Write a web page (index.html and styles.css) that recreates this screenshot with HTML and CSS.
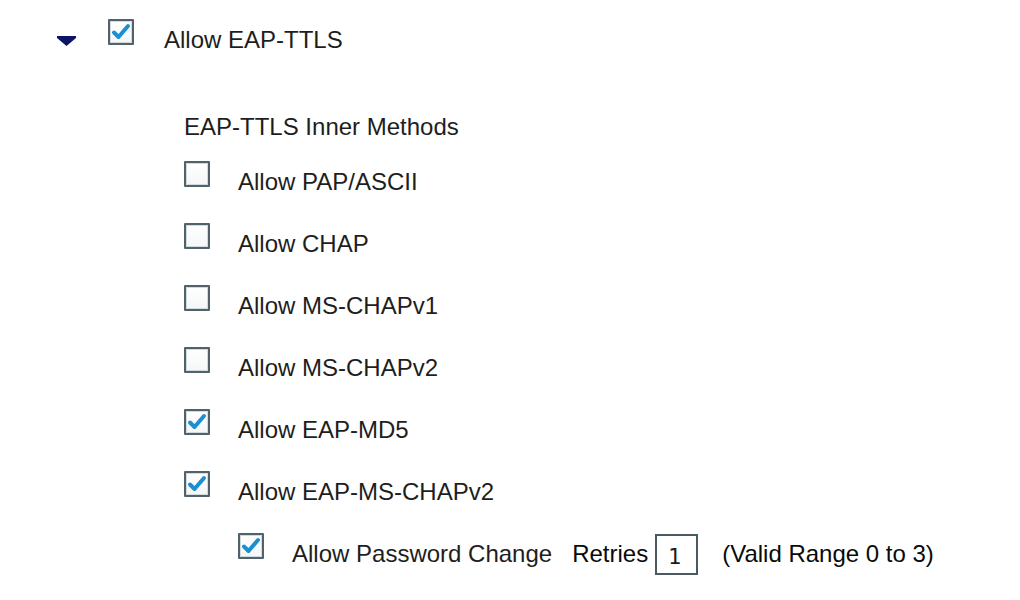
FILE: index.html
```html
<!DOCTYPE html>
<html>
<head>
<meta charset="utf-8">
<link rel="stylesheet" href="styles.css">
</head>
<body>
<div class="page">
  <div class="row top-row">
    <span class="caret"><svg width="19" height="10" viewBox="0 0 19 10"><polygon points="0,0 19,0 19,2 9.5,10 0,2" fill="#0b1566"/></svg></span>
    <span class="cb checked"><svg viewBox="0 0 22 22" width="22" height="22"><path d="M4 11.5 L8.5 16 L18 5" fill="none" stroke="#1b8fd2" stroke-width="4" stroke-linecap="round" stroke-linejoin="round"/></svg></span>
    <span class="label">Allow EAP-TTLS</span>
  </div>

  <div class="inner">
    <div class="heading">EAP-TTLS Inner Methods</div>
    <div class="row">
      <span class="cb"></span>
      <span class="label">Allow PAP/ASCII</span>
    </div>
    <div class="row">
      <span class="cb"></span>
      <span class="label">Allow CHAP</span>
    </div>
    <div class="row">
      <span class="cb"></span>
      <span class="label">Allow MS-CHAPv1</span>
    </div>
    <div class="row">
      <span class="cb"></span>
      <span class="label">Allow MS-CHAPv2</span>
    </div>
    <div class="row">
      <span class="cb checked"><svg viewBox="0 0 22 22" width="22" height="22"><path d="M4 11.5 L8.5 16 L18 5" fill="none" stroke="#1b8fd2" stroke-width="4" stroke-linecap="round" stroke-linejoin="round"/></svg></span>
      <span class="label">Allow EAP-MD5</span>
    </div>
    <div class="row">
      <span class="cb checked"><svg viewBox="0 0 22 22" width="22" height="22"><path d="M4 11.5 L8.5 16 L18 5" fill="none" stroke="#1b8fd2" stroke-width="4" stroke-linecap="round" stroke-linejoin="round"/></svg></span>
      <span class="label">Allow EAP-MS-CHAPv2</span>
    </div>
    <div class="row nested">
      <span class="cb checked"><svg viewBox="0 0 22 22" width="22" height="22"><path d="M4 11.5 L8.5 16 L18 5" fill="none" stroke="#1b8fd2" stroke-width="4" stroke-linecap="round" stroke-linejoin="round"/></svg></span>
      <span class="label">Allow Password Change</span>
      <span class="label retries">Retries</span>
      <input class="retries-input" type="text" value="1">
      <span class="label range">(Valid Range 0 to 3)</span>
    </div>
  </div>
</div>
</body>
</html>
```

FILE: styles.css
```css
html, body {
  margin: 0;
  padding: 0;
  background: #ffffff;
}

body {
  font-family: "Liberation Sans", Arial, Helvetica, sans-serif;
  font-size: 24px;
  color: #1e1e1e;
}

.page {
  padding-top: 19px;
}

.row {
  display: flex;
  align-items: flex-start;
  height: 62px;
}

.top-row {
  padding-left: 57px;
  height: 94px;
}

.caret {
  display: block;
  width: 19px;
  height: 10px;
  margin-top: 17px;
  margin-right: 32px;
}

.caret svg {
  display: block;
}

.cb {
  box-sizing: border-box;
  width: 26px;
  height: 26px;
  border: 2px solid #52626a;
  border-radius: 1px;
  background: linear-gradient(#ffffff, #f4f6f7);
  box-shadow: inset 0 0 0 1px #d3dadd;
  display: flex;
  align-items: center;
  justify-content: center;
  flex: none;
}

.cb svg {
  display: block;
}

.label {
  line-height: 28px;
  padding-top: 7px;
  white-space: nowrap;
}

.top-row .cb {
  margin-right: 30px;
}

.inner {
  padding-left: 184px;
}

.heading {
  line-height: 28px;
  margin-bottom: 20px;
}

.inner .cb {
  margin-right: 28px;
}

.nested {
  padding-left: 54px;
}

.retries {
  margin-left: 20px;
  color: #0a0a0a;
}

.retries-input {
  box-sizing: border-box;
  width: 43px;
  height: 41px;
  margin: 1px 0 0 7px;
  border: 2px solid #4b5a62;
  border-radius: 0;
  padding: 5px 0 0 11px;
  font-family: "DejaVu Sans", sans-serif;
  font-size: 21px;
  color: #1a1a1a;
  background: #fff;
  outline: none;
}

.range {
  margin-left: 24px;
  color: #0a0a0a;
}
```
